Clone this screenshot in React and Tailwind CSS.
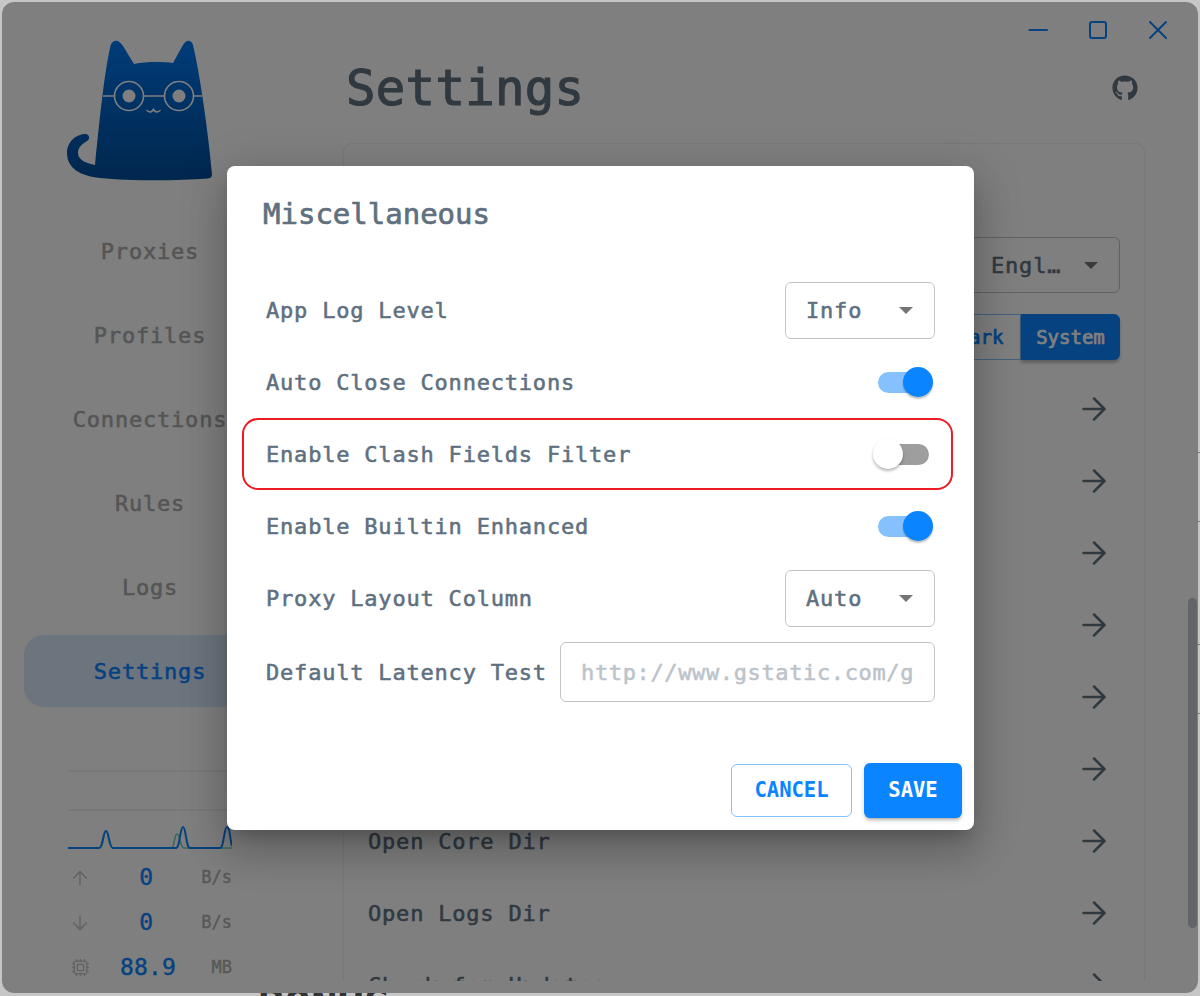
import React from "react";
import { ArrowUp, ArrowDown, Cpu } from "lucide-react";
import { FaGithub } from "react-icons/fa";

const navItems = ["Proxies", "Profiles", "Connections", "Rules", "Logs", "Settings"];
const settingRows = [
  "Theme Setting",
  "Layout Setting",
  "Miscellaneous",
  "Advanced",
  "Hotkey Setting",
  "Runtime Config",
  "Open Core Dir",
  "Open Logs Dir",
  "Check for Updates",
];

const Logo = () => (
  <svg width="160" height="160" viewBox="60 30 160 160" className="ml-[58px] self-start">
    <defs>
      <linearGradient id="cat" x1="0" y1="0" x2="0" y2="1">
        <stop offset="0" stopColor="#0078f0" />
        <stop offset="1" stopColor="#004e9c" />
      </linearGradient>
    </defs>
    <path
      fill="url(#cat)"
      d="M115 41C118 40 120 42 123 46L134 64C146 61.5 162 61.5 173 63L183 45C186 40 191 39 193 45C200 75 208 130 212 174C212 177 211 178 208 178.5C175 181 130 181 100 178C80 176 67 168 67 153C67 141 77 134 86 134C90 135 90 139 87 141C80 145 78 149 78 153C78 160 86 163 95 165C99 125 104 75 110 48C111 43 113 41 115 41Z"
    />
    <g fill="none" stroke="#fff" strokeWidth="1.6">
      <circle cx="129" cy="96" r="14.5" />
      <circle cx="179" cy="96" r="14.5" />
      <path d="M103 96H114.5M143.5 96H164.5M193.5 96H202" />
      <path d="M147 110.5C150 113 152 112 153.5 109.5C155 112 157 113 160 110.5" strokeLinecap="round" />
    </g>
    <circle cx="129" cy="96" r="6.5" fill="#fff" />
    <circle cx="179" cy="96" r="6.5" fill="#fff" />
  </svg>
);

const Chart = () => (
  <svg width="164" height="80" viewBox="68 770 164 80" className="block">
    <path d="M68 771H232M68 810H232" stroke="#000" strokeOpacity="0.12" fill="none" />
    <path
      d="M100 848C104 848 103 831 106 831C109 831 108 848 113 848H171C175 848 174 834 177 834C180 834 180 848 184 848H222H232"
      stroke="#6fd0c0"
      strokeWidth="1.5"
      fill="none"
    />
    <path
      d="M68 848H99C103 848 103 831 106 831C109 831 109 848 113 848H176C180 848 180 827 183 827C186 827 186 848 190 848H220C224 848 224 827 227 827C230 827 230 840 232 846"
      stroke="#0a84ff"
      strokeWidth="2"
      fill="none"
    />
  </svg>
);

const Stat = ({ icon, value, unit }) => (
  <div className="flex h-[45px] w-[164px] items-center">
    <div className="flex w-[24px] justify-center text-[#c4c4c4]">{icon}</div>
    <div className="w-[112px] text-center text-[23px] tracking-[0.2px] text-[#0a84ff] [-webkit-text-stroke:0.4px]">{value}</div>
    <div className="flex-1 text-right text-[17px] whitespace-nowrap text-[#b0b0b0] [-webkit-text-stroke:0.4px]">{unit}</div>
  </div>
);

const ForwardArrow = () => (
  <svg width="24" height="24" viewBox="0 0 24 24" fill="none" stroke="#637381" strokeWidth="2.5" strokeLinecap="round" strokeLinejoin="round">
    <path d="M1.5 12H22.5M12 1.5L22.5 12L12 22.5" />
  </svg>
);

const Caret = ({ color = "#757575" }) => (
  <svg width="14" height="7" viewBox="0 0 14 7" className="shrink-0">
    <path d="M0 0H14L7 7Z" fill={color} />
  </svg>
);

const Select = ({ value }) => (
  <div className="flex h-[57px] w-[150px] items-center justify-between rounded-[6px] border border-[#c4c4c4] pr-[21px] pl-[20px]">
    <span>{value}</span>
    <Caret />
  </div>
);

const Switch = ({ on }) => (
  <div className="relative mr-[2px] flex h-[30px] w-[60px] items-center pl-[5px]">
    <div className={on ? "h-[21px] w-[51px] rounded-full bg-[#85c1ff]" : "h-[21px] w-[51px] rounded-full bg-[#9e9e9e]"} />
    <div
      className={
        on
          ? "absolute top-0 right-0 h-[30px] w-[30px] rounded-full bg-[#0a84ff] shadow-[0_2px_2px_rgba(0,0,0,0.25)]"
          : "absolute top-0 left-0 h-[30px] w-[30px] rounded-full bg-white shadow-[0_2px_3px_rgba(0,0,0,0.3)]"
      }
    />
  </div>
);

const Row = ({ label, children }) => (
  <div className="flex h-[72px] items-center justify-between">
    <span>{label}</span>
    {children}
  </div>
);

const Dialog = () => (
  <div className="absolute top-[164px] left-[225px] flex h-[664px] w-[747px] flex-col justify-between rounded-[8px] bg-white text-[#5f7080] shadow-[0_11px_15px_-7px_rgba(0,0,0,0.2),0_24px_38px_3px_rgba(0,0,0,0.14),0_9px_46px_8px_rgba(0,0,0,0.12)]">
    <div>
      <h2 className="flex h-[98px] items-center pl-[36px] text-[29px] [-webkit-text-stroke:0.7px]">Miscellaneous</h2>
      <div className="mt-[10px] px-[39px] text-[22px] tracking-[0.8px] [-webkit-text-stroke:0.55px]">
        <Row label="App Log Level">
          <Select value="Info" />
        </Row>
        <Row label="Auto Close Connections">
          <Switch on />
        </Row>
        <div className="mr-[-18px] ml-[-24px] flex h-[72px] items-center justify-between rounded-[16px] border-2 border-[#ed1c24] pr-[16px] pl-[22px]">
          <span>Enable Clash Fields Filter</span>
          <Switch />
        </div>
        <Row label="Enable Builtin Enhanced">
          <Switch on />
        </Row>
        <Row label="Proxy Layout Column">
          <Select value="Auto" />
        </Row>
        <div className="mt-[2px] flex h-[72px] items-center justify-between">
          <span>Default Latency Test</span>
          <input
            readOnly
            placeholder="http://www.gstatic.com/generate_204"
            className="h-[60px] w-[375px] rounded-[6px] border border-[#c4c4c4] px-[20px] text-[22px] tracking-[0.63px] outline-none placeholder:text-[#bcc3ca]"
          />
        </div>
      </div>
    </div>
    <div className="flex items-center justify-end gap-[12px] pr-[12px] pb-[12px] text-[20.5px] font-bold">
      <button className="h-[53px] w-[121px] rounded-[6px] border border-[#85c1ff] pb-[1px] text-[#0a84ff]">CANCEL</button>
      <button className="h-[55px] w-[98px] rounded-[6px] bg-[#0a84ff] pb-[1px] text-white shadow-[0_3px_3px_-2px_rgba(0,0,0,0.25),0_3px_4px_rgba(0,0,0,0.14)]">SAVE</button>
    </div>
  </div>
);

const App = () => {
  return (
    <div className="relative h-[996px] w-[1200px] overflow-hidden bg-[#c6c6c6] px-[2px] pt-[2px] pb-[3px] font-['DejaVu_Sans_Mono',monospace]">
      <div className="absolute top-[980px] left-[258px] text-[44px] leading-[52px] font-bold text-[#333]">BONUS</div>
      <div className="absolute top-[452px] right-0 h-px w-[2px] bg-[#777]" />
      <div className="absolute top-[521px] right-0 h-px w-[2px] bg-[#777]" />
      <div className="absolute top-[644px] right-0 h-px w-[2px] bg-[#777]" />
      <div className="absolute top-[713px] right-0 h-px w-[2px] bg-[#777]" />

      <div className="relative flex h-full overflow-hidden rounded-[12px] bg-white">
        <aside className="flex w-[296px] shrink-0 flex-col items-center pt-[28px]">
          <Logo />
          <nav className="mt-[25px] flex w-[252px] flex-col gap-[12px]">
            {navItems.map((item) => (
              <div
                key={item}
                className={
                  item === "Settings"
                    ? "flex h-[72px] items-center justify-center rounded-[20px] bg-[#d8e8fb] text-[22px] tracking-[0.8px] whitespace-nowrap text-[#0a84ff] [-webkit-text-stroke:0.55px]"
                    : "flex h-[72px] items-center justify-center text-[22px] tracking-[0.8px] whitespace-nowrap text-[#ababab] [-webkit-text-stroke:0.55px]"
                }
              >
                {item}
              </div>
            ))}
          </nav>
          <div className="mt-[63px] w-[164px]">
            <Chart />
            <div className="mt-[5px]">
              <Stat icon={<ArrowUp size={22} strokeWidth={1.6} />} value="0" unit="B/s" />
              <Stat icon={<ArrowDown size={22} strokeWidth={1.6} />} value="0" unit="B/s" />
              <Stat icon={<Cpu size={19} strokeWidth={1.6} />} value="88.9" unit="MB" />
            </div>
          </div>
        </aside>

        <main className="flex h-[979px] flex-1 flex-col overflow-hidden pl-[46px]">
          <div className="flex h-[56px] shrink-0 items-center justify-end gap-[36px] pr-[28px]">
            <svg width="24" height="24" viewBox="0 0 24 24" stroke="#0a84ff" strokeWidth="2" strokeLinecap="round">
              <path d="M3.5 12H21" />
            </svg>
            <svg width="24" height="24" viewBox="0 0 24 24" fill="none" stroke="#0a84ff" strokeWidth="2">
              <rect x="4" y="4" width="16" height="16" rx="2" />
            </svg>
            <svg width="24" height="24" viewBox="0 0 24 24" stroke="#0a84ff" strokeWidth="2" strokeLinecap="round">
              <path d="M4 4L20 20M20 4L4 20" />
            </svg>
          </div>
          <header className="flex h-[60px] w-[800px] shrink-0 items-center justify-between pr-[6px] pl-[2px] text-[#637381]">
            <h1 className="pt-[2px] text-[49px] tracking-[0.3px] [-webkit-text-stroke:1.2px]">Settings</h1>
            <FaGithub size={26} />
          </header>
          <section className="mt-[26px] w-[800px] shrink-0 rounded-t-[8px] px-[24px] pt-[13px] pb-[60px] text-[22px] tracking-[0.8px] text-[#637381] shadow-[0_0_3px_rgba(0,0,0,0.16)] [-webkit-text-stroke:0.55px]">
            <div className="flex h-[72px] items-center">Verge Setting</div>
            <div className="flex h-[72px] items-center justify-between">
              <span>Language</span>
              <div className="flex h-[56px] w-[160px] items-center justify-between rounded-[6px] border border-[#c4c4c4] pr-[21px] pl-[30px]">
                <span>Engl…</span>
                <Caret />
              </div>
            </div>
            <div className="flex h-[72px] items-center justify-between">
              <span>Theme Mode</span>
              <div className="flex h-[46px] text-[19px] tracking-normal text-[#0a84ff] [-webkit-text-stroke:0.7px]">
                <div className="flex w-[90px] items-center justify-center rounded-l-[6px] border border-r-0 border-[#85c1ff]">Light</div>
                <div className="flex w-[81px] items-center justify-center border border-[#85c1ff]">Dark</div>
                <div className="flex w-[99px] items-center justify-center rounded-r-[6px] bg-[#0a84ff] text-white shadow-[0_3px_3px_rgba(0,0,0,0.25)]">System</div>
              </div>
            </div>
            {settingRows.map((row) => (
              <div key={row} className="flex h-[72px] items-center justify-between pr-[14px]">
                <span>{row}</span>
                <ForwardArrow />
              </div>
            ))}
          </section>
        </main>

        <div className="absolute top-[596px] right-[1px] h-[330px] w-[9px] rounded-full bg-[#c4c8ce]" />
        <div className="absolute inset-0 bg-black/50" />
        <Dialog />
      </div>
    </div>
  );
};

export default App;
